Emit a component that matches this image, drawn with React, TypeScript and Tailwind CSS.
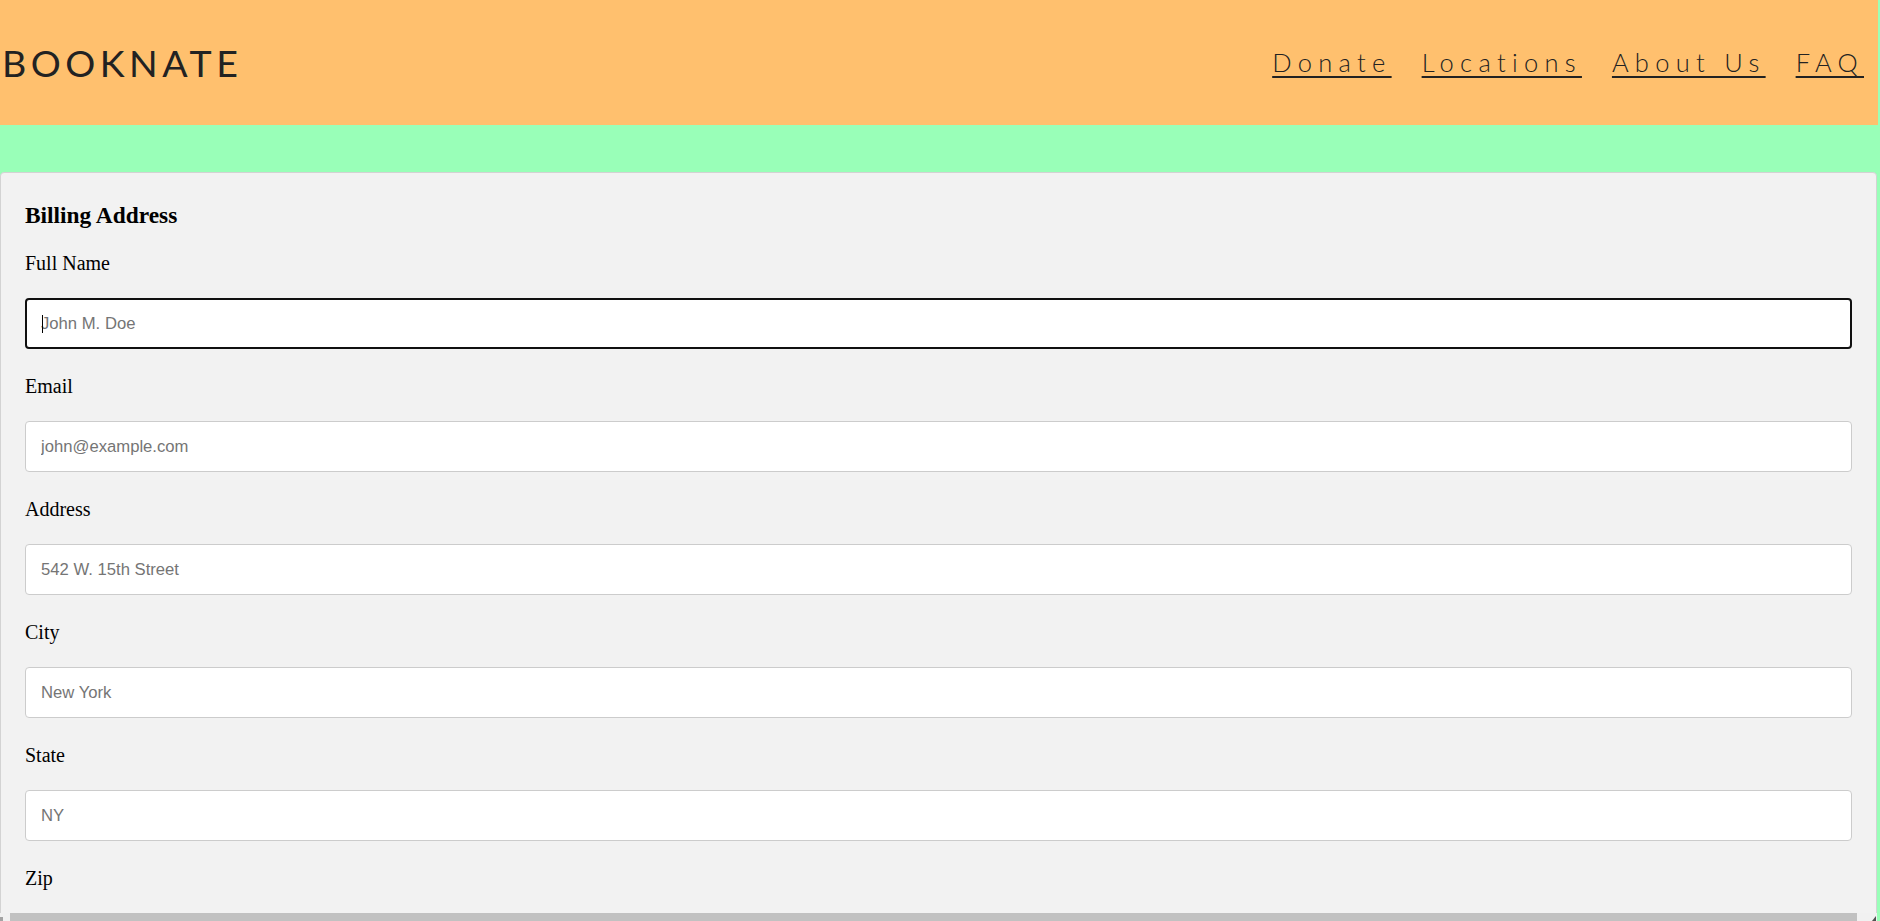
import React from "react";

const fields = [
  { label: "Full Name", ph: "John M. Doe", focused: true },
  { label: "Email", ph: "john@example.com" },
  { label: "Address", ph: "542 W. 15th Street" },
  { label: "City", ph: "New York" },
  { label: "State", ph: "NY" },
  { label: "Zip", ph: "10001" },
];

export default function App() {
  return (
    <div className="relative h-[921px] w-full overflow-hidden bg-[#99ffb8]">
      <header className="mr-[2px] flex h-[125px] items-center justify-between bg-[#ffc06e] pl-[2px] pr-[14px]">
        <div className="font-['Lato',sans-serif] text-[37.5px] font-normal leading-none tracking-[4.5px] text-[#222]">
          BOOKNATE
        </div>
        <nav className="flex items-center gap-[30px] font-['Lato',sans-serif] text-[25.5px] font-light leading-none tracking-[6.3px] text-[#222]">
          {["Donate", "Locations", "About Us", "FAQ"].map((n) => (
            <a key={n} href="#" className="underline decoration-2 underline-offset-[4px]">
              {n}
            </a>
          ))}
        </nav>
      </header>
      <div className="h-[47px]" />
      <div className="mr-[3px] rounded-[4px] border border-[#d3d3d3] bg-[#f2f2f2] px-[24px] pt-[29px] font-['Liberation_Serif',serif] text-black">
        <h3 className="mb-[23px] text-[23.4px] font-bold leading-[27px]">Billing Address</h3>
        {fields.map((f) => (
          <div key={f.label}>
            <label className="mb-[23px] block text-[20px] leading-[23px]">{f.label}</label>
            <div className="relative mb-[26px]">
              <input
                type="text"
                placeholder={f.ph}
                className={
                  f.focused
                    ? "block h-[51px] w-full rounded-[4px] border-2 border-[#101010] bg-white px-[14px] font-['Liberation_Sans',sans-serif] text-[16.67px] outline-none placeholder:text-[#757575]"
                    : "block h-[51px] w-full rounded-[4px] border border-[#cccccc] bg-white px-[15px] font-['Liberation_Sans',sans-serif] text-[16.67px] outline-none placeholder:text-[#757575]"
                }
              />
              {f.focused && (
                <span className="absolute left-[17px] top-[17px] h-[18px] w-px bg-black" />
              )}
            </div>
          </div>
        ))}
      </div>
      {/* horizontal scrollbar overlay */}
      <div className="absolute bottom-0 left-0 flex h-[8px] w-[1877px] items-end bg-[#f1f1f1]">
        <div className="h-[4px] w-[3px] self-end bg-[#a3a3a3]" />
        <div className="ml-[7px] h-[8px] w-[1847px] bg-[#c1c1c1]" />
        <div className="ml-auto mr-[1px] h-0 w-0 self-end border-b-[5px] border-l-[4px] border-b-[#505050] border-l-transparent" />
      </div>
    </div>
  );
}
